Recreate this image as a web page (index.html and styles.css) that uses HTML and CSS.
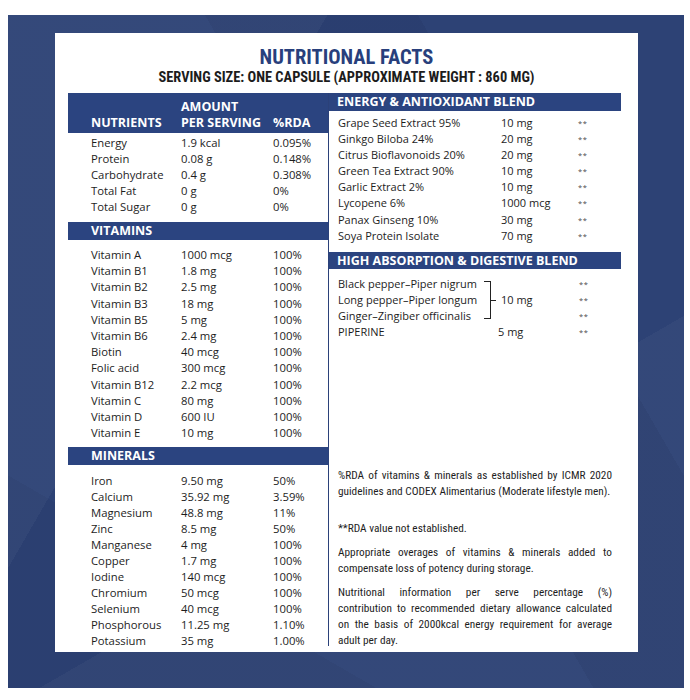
FILE: index.html
```html
<!DOCTYPE html>
<html>
<head>
<meta charset="utf-8">
<link rel="stylesheet" href="styles.css">
</head>
<body>
<div class="frame">
  <div class="panel">
    <h1 class="title">NUTRITIONAL FACTS</h1>
    <p class="serving">SERVING SIZE: ONE CAPSULE (APPROXIMATE WEIGHT : 860 MG)</p>
    <div class="cols">
      <div class="left">
        <div class="lhead">
          <span>NUTRIENTS</span>
          <span class="amt-head"><span class="hl">AMOUNT</span><span class="hl">PER SERVING</span></span>
          <span>%RDA</span>
        </div>
        <div class="ltable first">
          <span>Energy</span><span>1.9 kcal</span><span>0.095%</span>
          <span>Protein</span><span>0.08 g</span><span>0.148%</span>
          <span>Carbohydrate</span><span>0.4 g</span><span>0.308%</span>
          <span>Total Fat</span><span>0 g</span><span>0%</span>
          <span>Total Sugar</span><span>0 g</span><span>0%</span>
        </div>
        <div class="sec lsec vit-sec">VITAMINS</div>
        <div class="ltable vit">
          <span>Vitamin A</span><span>1000 mcg</span><span class="pc">100%</span>
          <span>Vitamin B1</span><span>1.8 mg</span><span class="pc">100%</span>
          <span>Vitamin B2</span><span>2.5 mg</span><span class="pc">100%</span>
          <span>Vitamin B3</span><span>18 mg</span><span class="pc">100%</span>
          <span>Vitamin B5</span><span>5 mg</span><span class="pc">100%</span>
          <span>Vitamin B6</span><span>2.4 mg</span><span class="pc">100%</span>
          <span>Biotin</span><span>40 mcg</span><span class="pc">100%</span>
          <span>Folic acid</span><span>300 mcg</span><span class="pc">100%</span>
          <span>Vitamin B12</span><span>2.2 mcg</span><span class="pc">100%</span>
          <span>Vitamin C</span><span>80 mg</span><span class="pc">100%</span>
          <span>Vitamin D</span><span>600 IU</span><span class="pc">100%</span>
          <span>Vitamin E</span><span>10 mg</span><span class="pc">100%</span>
        </div>
        <div class="sec lsec min-sec">MINERALS</div>
        <div class="ltable min">
          <span>Iron</span><span>9.50 mg</span><span class="pc">50%</span>
          <span>Calcium</span><span>35.92 mg</span><span class="pc">3.59%</span>
          <span>Magnesium</span><span>48.8 mg</span><span class="pc">11%</span>
          <span>Zinc</span><span>8.5 mg</span><span class="pc">50%</span>
          <span>Manganese</span><span>4 mg</span><span class="pc">100%</span>
          <span>Copper</span><span>1.7 mg</span><span class="pc">100%</span>
          <span>Iodine</span><span>140 mcg</span><span class="pc">100%</span>
          <span>Chromium</span><span>50 mcg</span><span class="pc">100%</span>
          <span>Selenium</span><span>40 mcg</span><span class="pc">100%</span>
          <span>Phosphorous</span><span>11.25 mg</span><span class="pc">1.10%</span>
          <span>Potassium</span><span>35 mg</span><span class="pc">1.00%</span>
        </div>
      </div>
      <div class="right">
        <div class="sec rsec">ENERGY &amp; ANTIOXIDANT BLEND</div>
        <div class="rtable energy">
          <span>Grape Seed Extract 95%</span><span>10 mg</span><span class="st">**</span>
          <span>Ginkgo Biloba 24%</span><span>20 mg</span><span class="st">**</span>
          <span>Citrus Bioflavonoids 20%</span><span>20 mg</span><span class="st">**</span>
          <span>Green Tea Extract 90%</span><span>10 mg</span><span class="st">**</span>
          <span>Garlic Extract 2%</span><span>10 mg</span><span class="st">**</span>
          <span>Lycopene 6%</span><span>1000 mcg</span><span class="st">**</span>
          <span>Panax Ginseng 10%</span><span>30 mg</span><span class="st">**</span>
          <span>Soya Protein Isolate</span><span>70 mg</span><span class="st">**</span>
        </div>
        <div class="sec rsec high-sec">HIGH ABSORPTION &amp; DIGESTIVE BLEND</div>
        <div class="htable">
          <span class="hn r1">Black pepper–Piper nigrum</span>
          <span class="brace"></span>
          <span class="hamt">10 mg</span>
          <span class="st r1">**</span>
          <span class="hn r2">Long pepper–Piper longum</span>
          <span class="st r2">**</span>
          <span class="hn r3">Ginger–Zingiber officinalis</span>
          <span class="st r3">**</span>
          <span class="hn r4">PIPERINE</span>
          <span class="pip">5 mg</span>
          <span class="st r4">**</span>
        </div>
        <div class="notes">
          <p class="n1"><span class="ln">%RDA of vitamins &amp; minerals as established by ICMR 2020</span><span class="ln last">guidelines and CODEX Alimentarius (Moderate lifestyle men).</span></p>
          <p class="n2"><span class="ln last">**RDA value not established.</span></p>
          <p class="n3"><span class="ln">Appropriate overages of vitamins &amp; minerals added to</span><span class="ln last">compensate loss of potency during storage.</span></p>
          <p class="n4"><span class="ln">Nutritional information per serve percentage (%)</span><span class="ln">contribution to recommended dietary allowance calculated</span><span class="ln">on the basis of 2000kcal energy requirement for average</span><span class="ln last">adult per day.</span></p>
        </div>
      </div>
    </div>
  </div>
</div>
</body>
</html>
```

FILE: styles.css
```css
html, body {
  margin: 0;
  padding: 0;
  background: #ffffff;
}

body {
  font-family: "Open Sans", "Noto Sans", sans-serif;
  color: #1d1d1d;
}

.frame {
  box-sizing: border-box;
  margin: 15px 0 0 8px;
  width: 676px;
  height: 673px;
  padding: 18px 46px 36px 47px;
  background-color: #2d4275;
  background-image:
    linear-gradient(120deg, rgba(255,255,255,0.035) 0 30%, transparent 30%),
    linear-gradient(60deg, transparent 0 55%, rgba(0,0,30,0.06) 55% 75%, transparent 75%),
    linear-gradient(150deg, transparent 0 65%, rgba(255,255,255,0.03) 65%),
    linear-gradient(30deg, rgba(0,0,30,0.05) 0 20%, transparent 20%);
}

.panel {
  box-sizing: border-box;
  width: 583px;
  height: 619px;
  background: #ffffff;
  padding-top: 13px;
}

.title {
  margin: 0;
  font-family: "Liberation Sans Narrow", "Roboto Condensed", "Roboto", sans-serif;
  font-weight: 700;
  font-size: 20.5px;
  line-height: 23px;
  text-align: center;
  color: #283f7c;
}

.serving {
  margin: 0;
  font-family: "Liberation Sans Narrow", "Roboto Condensed", "Roboto", sans-serif;
  font-weight: 700;
  font-size: 14.4px;
  line-height: 17px;
  text-align: center;
  color: #1c1c1c;
}

.cols {
  display: flex;
  margin-top: 7px;
  padding-left: 13px;
}

.left {
  box-sizing: border-box;
  width: 261px;
  height: 553px;
  border-right: 1px solid #2b4179;
}

.right {
  width: 292px;
  display: flex;
  flex-direction: column;
}

.lhead {
  display: grid;
  grid-template-columns: 90px 92px 1fr;
  align-items: end;
  height: 40px;
  box-sizing: border-box;
  padding: 6px 0 2px 23px;
  background: #2b4480;
  color: #ffffff;
  font-weight: 700;
  font-size: 12.5px;
  line-height: 16px;
}

.amt-head {
  display: flex;
  flex-direction: column;
}

.hl { display: block; white-space: nowrap; }

.ltable {
  display: grid;
  grid-template-columns: 90px 92px 1fr;
  padding-left: 23px;
  font-size: 11.3px;
  line-height: 16px;
}

.ltable.first { padding-top: 2px; }
.ltable.vit { padding-top: 7px; line-height: 16.2px; }
.ltable.min { padding-top: 8px; line-height: 15.9px; }

.sec {
  background: #2b4480;
  color: #ffffff;
  font-weight: 700;
  font-size: 12.5px;
  height: 18px;
  line-height: 18px;
}

.lsec { padding-left: 23px; margin-top: 7px; }
.min-sec { margin-top: 6px; }

.rsec { padding-left: 8px; }

.rtable {
  display: grid;
  grid-template-columns: 163px 77px 1fr;
  padding: 4px 0 0 9px;
  font-size: 11px;
  line-height: 16.1px;
}

.st {
  font-size: 7.5px;
  color: #4a4a4a;
  letter-spacing: 0.5px;
}

.high-sec {
  margin-top: 8px;
  height: 17px;
  line-height: 17px;
}

.htable {
  display: grid;
  grid-template-columns: 146px 18px 77px 1fr;
  grid-template-rows: repeat(4, 16px);
  padding: 7px 0 0 9px;
  font-size: 11px;
  line-height: 16px;
}

.hn { grid-column: 1; white-space: nowrap; }
.r1 { grid-row: 1; }
.r2 { grid-row: 2; }
.r3 { grid-row: 3; }
.r4 { grid-row: 4; }
.st.r1, .st.r2, .st.r3, .st.r4 { grid-column: 4; }

.brace {
  grid-column: 2;
  grid-row: 1 / 4;
  position: relative;
  margin: 5px 0 5px 0;
  width: 6px;
  border-top: 1px solid #222;
  border-right: 1px solid #222;
  border-bottom: 1px solid #222;
}

.brace::after {
  content: "";
  position: absolute;
  left: 6px;
  top: 50%;
  width: 6px;
  border-top: 1px solid #222;
}

.hamt {
  grid-column: 3;
  grid-row: 1 / 4;
  align-self: center;
  margin-left: -1px;
}

.pip {
  grid-column: 3;
  grid-row: 4;
  margin-left: -4px;
}

.notes {
  padding: 0 9px 0 9px;
  margin-top: 128px;
  font-family: "Liberation Sans Narrow", "Roboto Condensed", "Roboto", sans-serif;
  font-size: 11.3px;
  line-height: 16px;
  color: #1e1e1e;
}

.notes p {
  margin: 0;
}

.notes .ln {
  display: block;
  white-space: nowrap;
  text-align: justify;
  text-align-last: justify;
}

.notes .ln.last {
  text-align-last: left;
}

.notes .n2 { margin-top: 21px; }
.notes .n3 { margin-top: 8px; }
.notes .n4 { margin-top: 8px; }
```
